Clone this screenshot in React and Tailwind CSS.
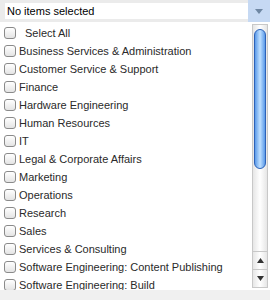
const items = [
  'Business Services & Administration',
  'Customer Service & Support',
  'Finance',
  'Hardware Engineering',
  'Human Resources',
  'IT',
  'Legal & Corporate Affairs',
  'Marketing',
  'Operations',
  'Research',
  'Sales',
  'Services & Consulting',
  'Software Engineering: Content Publishing',
  'Software Engineering: Build',
];

function Box() {
  return (
    <span className="w-[12px] h-[12px] shrink-0 rounded-[3px] border border-[#8a8a8a] bg-gradient-to-b from-white to-[#e4e4e4]" />
  );
}

export default function App() {
  return (
    <div className="w-[270px] h-[300px] bg-[#f0f0f0] overflow-hidden text-[11px] text-[#2a2a2a] font-['Liberation_Sans',Arial,sans-serif]">
      <div className="h-[22px] flex bg-[#ebebeb]">
        <div className="flex-1 pl-[5px] pt-[3px]">
          <div className="h-[16px] bg-white pl-[2px] leading-[16px] text-black">No items selected</div>
        </div>
        <div className="w-[22px] bg-[#c6d9f3] flex items-center justify-center">
          <svg width="8" height="5" viewBox="0 0 8 5"><path d="M0 0h8L4 5z" fill="#6f87a3" /></svg>
        </div>
      </div>
      <div className="h-[268px] flex bg-white">
        <div className="flex-1 overflow-hidden pt-[2px]">
          <div className="h-[18px] flex items-center pl-[4px] gap-[9px]">
            <Box />
            <span>Select All</span>
          </div>
          {items.map((t) => (
            <div key={t} className="h-[18px] flex items-center pl-[4px] gap-[3px] whitespace-nowrap">
              <Box />
              <span>{t}</span>
            </div>
          ))}
        </div>
        <div className="w-[16px] mr-[2px] mt-[2px] mb-[2px] border border-[#c8c8c8] bg-gradient-to-r from-[#e6e6e6] via-white to-[#e6e6e6] flex flex-col">
          <div className="flex-1 px-[1px] pt-[4px]">
            <div className="h-[140px] rounded-full border border-[#2c62b8] bg-gradient-to-r from-[#5b9ae8] via-[#bfe0ff] to-[#5b9ae8]" />
          </div>
          <div className="h-[18px] border-t border-[#c8c8c8] flex items-center justify-center">
            <svg width="7" height="5" viewBox="0 0 7 5"><path d="M3.5 0L7 5H0z" fill="#333" /></svg>
          </div>
          <div className="h-[18px] border-t border-[#c8c8c8] flex items-center justify-center">
            <svg width="7" height="5" viewBox="0 0 7 5"><path d="M0 0h7L3.5 5z" fill="#333" /></svg>
          </div>
        </div>
      </div>
    </div>
  );
}
